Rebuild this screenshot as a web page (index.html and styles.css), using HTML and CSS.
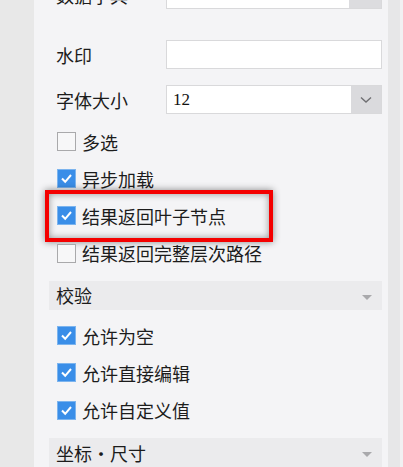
FILE: index.html
```html
<!DOCTYPE html>
<html lang="zh">
<head>
<meta charset="utf-8">
<link rel="stylesheet" href="styles.css">
</head>
<body>
<div class="page">
  <div class="panel">
    <div class="field field-cut">
      <span class="label">数据字典</span>
      <div class="input"><span class="btn"></span></div>
    </div>
    <div class="field field-first">
      <span class="label">水印</span>
      <div class="input"></div>
    </div>
    <div class="field field-second">
      <span class="label">字体大小</span>
      <div class="input select">
        <span class="value">12</span>
        <span class="btn">
          <svg width="12" height="8" viewBox="0 0 12 8"><path d="M1 1.5 L6 6 L11 1.5" fill="none" stroke="#6f6f72" stroke-width="1.4"/></svg>
        </span>
      </div>
    </div>

    <div class="checks checks-top">
      <div class="check"><span class="box"></span><span>多选</span></div>
      <div class="check"><span class="box on"><svg width="17" height="17" viewBox="0 0 17 17"><path d="M4 8.5 L7.2 11.8 L13 5" fill="none" stroke="#fff" stroke-width="2"/></svg></span><span>异步加载</span></div>
      <div class="check highlighted"><span class="box on"><svg width="17" height="17" viewBox="0 0 17 17"><path d="M4 8.5 L7.2 11.8 L13 5" fill="none" stroke="#fff" stroke-width="2"/></svg></span><span>结果返回叶子节点</span><span class="redbox"></span></div>
      <div class="check"><span class="box"></span><span>结果返回完整层次路径</span></div>
    </div>

    <div class="section"><span>校验</span><span class="caret"></span></div>

    <div class="checks">
      <div class="check"><span class="box on"><svg width="17" height="17" viewBox="0 0 17 17"><path d="M4 8.5 L7.2 11.8 L13 5" fill="none" stroke="#fff" stroke-width="2"/></svg></span><span>允许为空</span></div>
      <div class="check"><span class="box on"><svg width="17" height="17" viewBox="0 0 17 17"><path d="M4 8.5 L7.2 11.8 L13 5" fill="none" stroke="#fff" stroke-width="2"/></svg></span><span>允许直接编辑</span></div>
      <div class="check"><span class="box on"><svg width="17" height="17" viewBox="0 0 17 17"><path d="M4 8.5 L7.2 11.8 L13 5" fill="none" stroke="#fff" stroke-width="2"/></svg></span><span>允许自定义值</span></div>
    </div>

    <div class="section section-last"><span>坐标・尺寸</span><span class="caret"></span></div>
  </div>
  <div class="gutter"></div>
  <div class="edge"></div>
</div>
</body>
</html>
```

FILE: styles.css
```css
html, body {
  margin: 0;
  padding: 0;
}
body {
  width: 403px;
  height: 467px;
  overflow: hidden;
  background: #e8e8e8;
  font-family: "Noto Sans CJK SC", "Noto Sans", sans-serif;
  font-size: 18px;
  color: #1c1c1c;
}
.page {
  display: flex;
  height: 467px;
  padding-left: 34px;
}
.panel {
  width: 354px;
  box-sizing: border-box;
  padding: 0 6px 0 15px;
  background: #f4f4f6;
  display: flex;
  flex-direction: column;
}
.gutter {
  width: 12px;
  background: #e7e7e8;
}
.edge {
  flex: 1;
  background: #f1f1f2;
}
.field {
  display: flex;
  align-items: center;
  height: 29px;
  padding-left: 7px;
}
.field-cut {
  margin-top: -20px;
}
.field-first {
  margin-top: 31px;
}
.field-second {
  margin-top: 16px;
}
.label {
  width: 110px;
  line-height: 1;
  white-space: nowrap;
}
.input {
  flex: 1;
  height: 29px;
  box-sizing: border-box;
  background: #fff;
  border: 1px solid #d9d9db;
  display: flex;
  justify-content: flex-end;
  align-items: stretch;
}
.field-cut .btn {
  width: 32px;
  background: #dcdcdf;
}
.select {
  justify-content: space-between;
}
.value {
  font-family: "Liberation Serif", serif;
  font-size: 17px;
  color: #111;
  line-height: 27px;
  padding-left: 6px;
}
.select .btn {
  width: 30px;
  background: #dadadd;
  display: flex;
  align-items: center;
  justify-content: center;
}
.checks {
  display: flex;
  flex-direction: column;
  padding-left: 8px;
  margin-top: 7.5px;
}
.checks-top {
  margin-top: 9px;
}
.check {
  position: relative;
  height: 37px;
  display: flex;
  align-items: center;
  gap: 6px;
  line-height: 1;
}
.check + .check {
  height: 37.3px;
}
.box {
  width: 19px;
  height: 19px;
  box-sizing: border-box;
  border: 1px solid #a9a9ab;
  background: #f7f7f8;
  display: flex;
  align-items: center;
  justify-content: center;
}
.box.on {
  background: #3a8ee8;
  border-color: #7cb4ee;
}
.redbox {
  position: absolute;
  left: -12px;
  top: -7px;
  width: 228px;
  height: 52px;
  box-sizing: border-box;
  border: 4px solid #f40000;
  box-shadow: 0 0 7px rgba(0, 0, 0, 0.45), inset 0 0 7px rgba(0, 0, 0, 0.4);
  pointer-events: none;
}
.section {
  margin-top: 9px;
  height: 30px;
  background: #ebebed;
  display: flex;
  align-items: center;
  justify-content: space-between;
  padding: 0 10px 0 7px;
  line-height: 1;
}
.section-last {
  margin-top: 9.5px;
}
.caret {
  width: 0;
  height: 0;
  border-left: 5px solid transparent;
  border-right: 5px solid transparent;
  border-top: 5px solid #a9a9ac;
  margin-top: 4px;
}
```
